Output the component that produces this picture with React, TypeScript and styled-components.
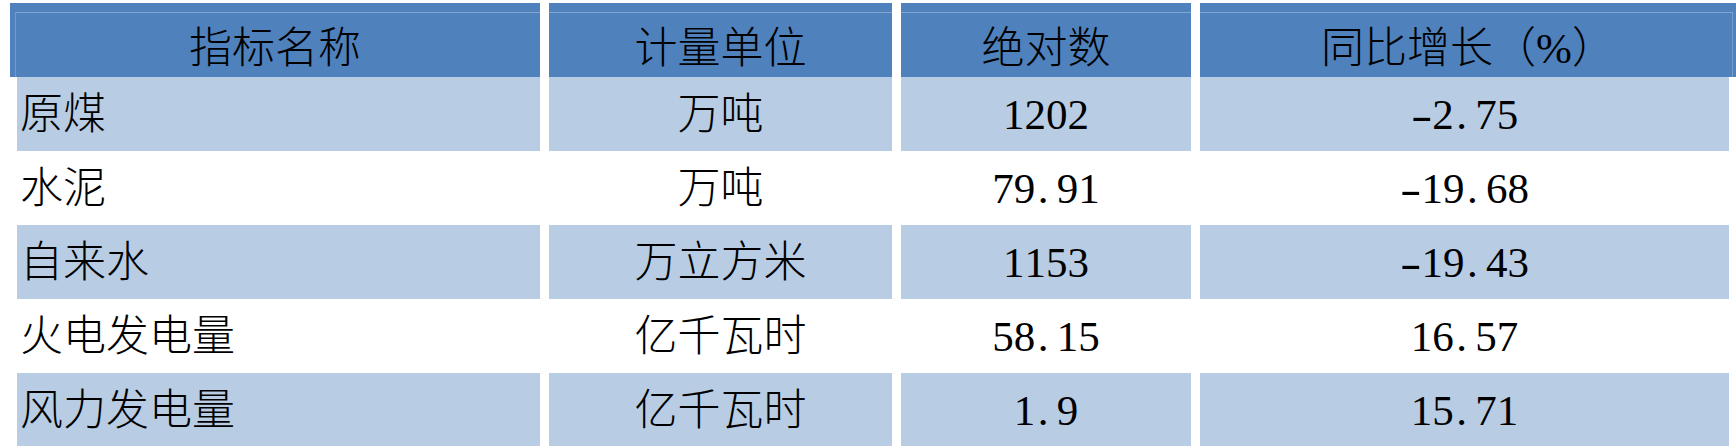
import React from "react";
import styled, { createGlobalStyle } from "styled-components";

const GlobalStyle = createGlobalStyle`
  html, body {
    margin: 0;
    padding: 0;
    background: #ffffff;
  }
`;

const HEAD_BLUE = "#4f81bd";
const ROW_BLUE = "#b8cce4";

const Table = styled.div`
  display: flex;
  flex-direction: column;
  padding: 3px 0 0 10px;
  font-family: "Liberation Serif", "Noto Sans CJK SC", serif;
  font-size: 43px;
  font-weight: 300;
  color: #000000;
  line-height: 1;
`;

const HeaderRow = styled.div`
  position: relative;
  display: grid;
  grid-template-columns: 530px 343px 290px 536px;
  column-gap: 9px;
  height: 74px;

  &::after {
    content: "";
    position: absolute;
    top: 9px;
    left: 5px;
    right: 3px;
    bottom: 0;
    border-top: 1px solid rgba(255, 255, 255, 0.3);
    border-left: 1px solid rgba(255, 255, 255, 0.2);
    border-right: 1px solid rgba(255, 255, 255, 0.2);
    pointer-events: none;
  }
`;

const HeaderCell = styled.div`
  background: ${HEAD_BLUE};
  display: flex;
  align-items: center;
  justify-content: center;
  padding-top: 16px;
  white-space: nowrap;
`;

const BodyRow = styled.div<{ $shaded: boolean }>`
  display: grid;
  grid-template-columns: 523px 343px 290px 529px;
  column-gap: 9px;
  height: 74px;
  margin: 0 7px;

  & > div {
    background: ${(p) => (p.$shaded ? ROW_BLUE : "transparent")};
  }
`;

const Cell = styled.div<{ $left?: boolean }>`
  display: flex;
  align-items: center;
  justify-content: ${(p) => (p.$left ? "flex-start" : "center")};
  padding-left: ${(p) => (p.$left ? "3px" : "0")};
  white-space: nowrap;
`;

// half-width cells like the original sheet font: every char takes 0.5em
const Char = styled.span<{ $kind: "digit" | "dot" | "dash" }>`
  display: inline-block;
  width: 0.5em;
  text-align: ${(p) => (p.$kind === "dot" ? "left" : "center")};
  padding-left: ${(p) => (p.$kind === "dot" ? "0.06em" : "0")};
  box-sizing: border-box;
  transform: ${(p) => (p.$kind === "dash" ? "scaleX(1.5)" : "none")};
`;

const Num = ({ text }: { text: string }) => (
  <span>
    {text.split("").map((c, i) => (
      <Char key={i} $kind={c === "." ? "dot" : c === "-" ? "dash" : "digit"}>
        {c}
      </Char>
    ))}
  </span>
);

const rows = [
  { name: "原煤", unit: "万吨", value: "1202", growth: "-2.75" },
  { name: "水泥", unit: "万吨", value: "79.91", growth: "-19.68" },
  { name: "自来水", unit: "万立方米", value: "1153", growth: "-19.43" },
  { name: "火电发电量", unit: "亿千瓦时", value: "58.15", growth: "16.57" },
  { name: "风力发电量", unit: "亿千瓦时", value: "1.9", growth: "15.71" },
];

const App = () => {
  return (
    <>
      <GlobalStyle />
      <Table>
        <HeaderRow>
          <HeaderCell>指标名称</HeaderCell>
          <HeaderCell>计量单位</HeaderCell>
          <HeaderCell>绝对数</HeaderCell>
          <HeaderCell>同比增长（%）</HeaderCell>
        </HeaderRow>
        {rows.map((row, i) => (
          <BodyRow key={row.name} $shaded={i % 2 === 0}>
            <Cell $left>{row.name}</Cell>
            <Cell>{row.unit}</Cell>
            <Cell>
              <Num text={row.value} />
            </Cell>
            <Cell>
              <Num text={row.growth} />
            </Cell>
          </BodyRow>
        ))}
      </Table>
    </>
  );
};

export default App;
